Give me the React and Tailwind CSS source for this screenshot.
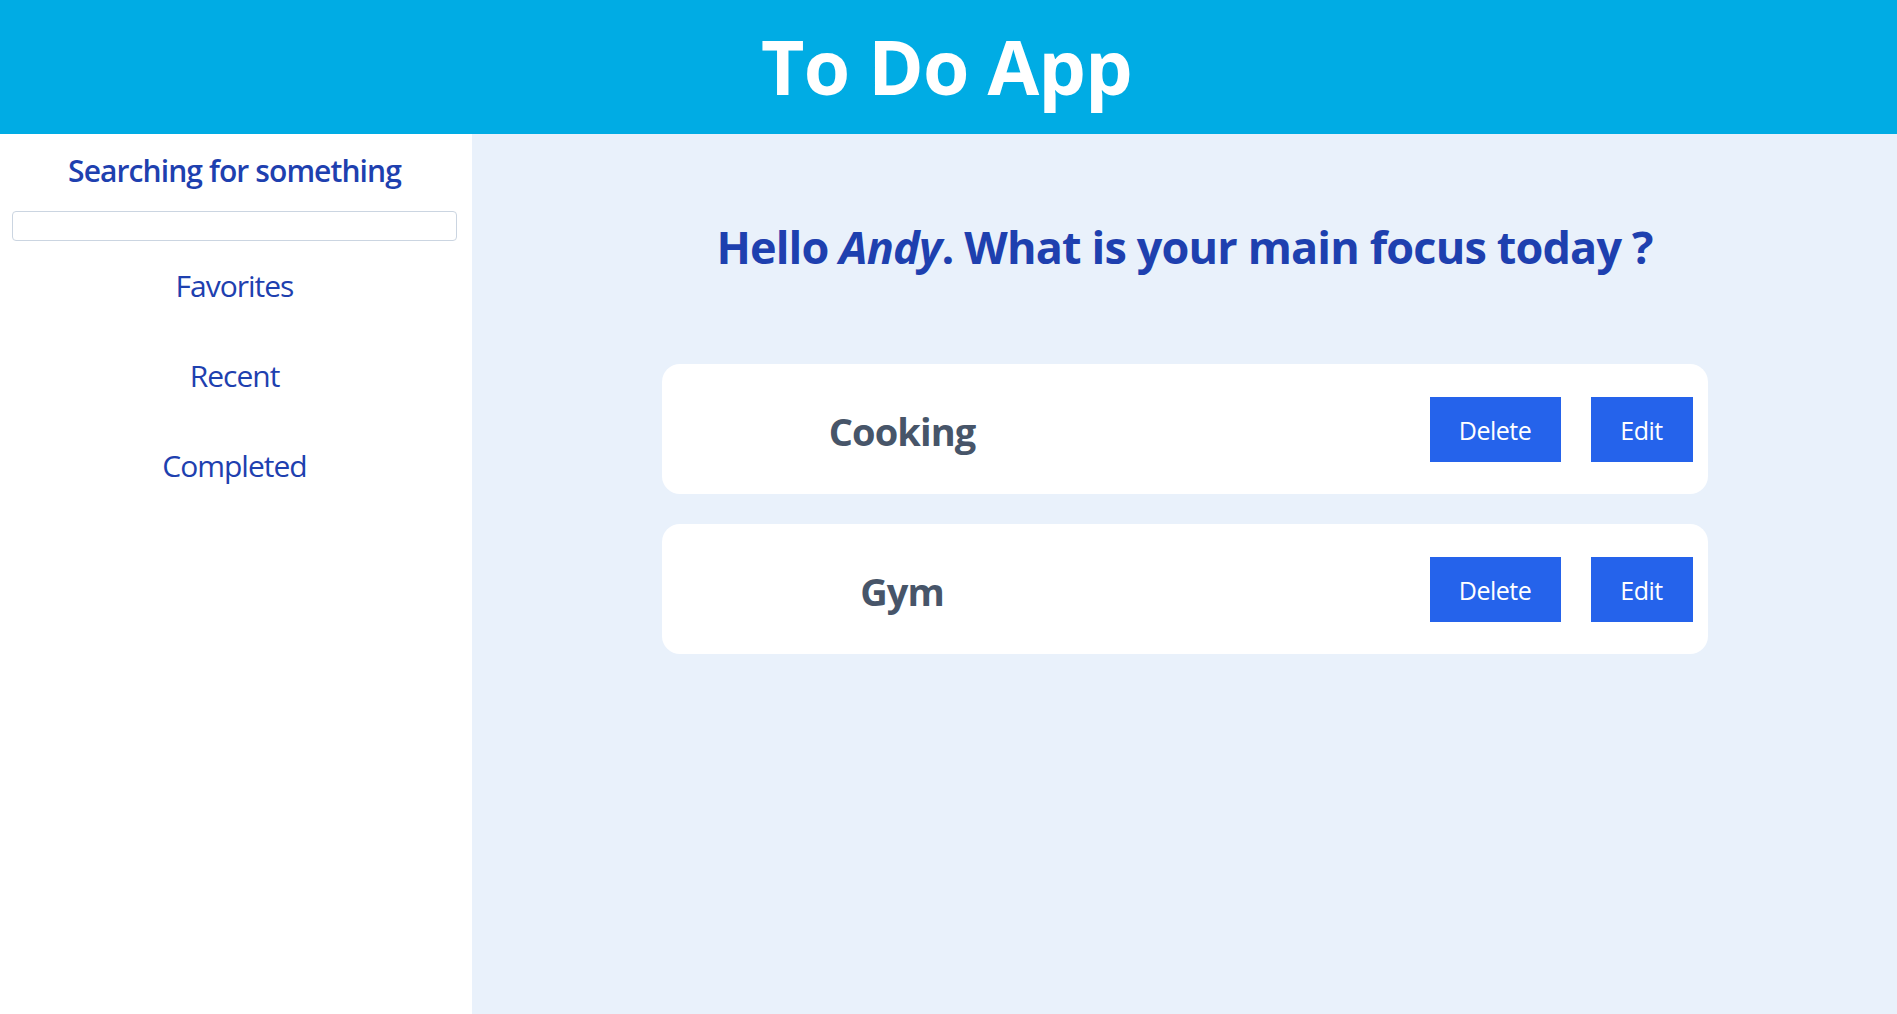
import React from 'react';

const todos = ['Cooking', 'Gym'];
const menu = ['Favorites', 'Recent', 'Completed'];

const App = () => {
    return (
        <div className="flex flex-col h-screen font-['Open_Sans','Noto_Sans',sans-serif]">
            <header className="h-[134px] shrink-0 bg-[#00ace4] flex items-center justify-center">
                <h1 className="text-white font-bold text-[75px] leading-none tracking-[-0.7px] pb-[2px] pr-[4px]">To Do App</h1>
            </header>

            <div className="flex flex-1 overflow-hidden">
                <aside className="w-[472px] shrink-0 bg-white flex flex-col items-center pl-3 pr-[15px]">
                    <h2 className="mt-[19px] text-[30px] leading-[36px] font-semibold tracking-[-0.9px] text-[#1e40af]">Searching for something</h2>
                    <input type="text" className="mt-[22px] w-full h-[30px] border border-[#cbd5e1] rounded-[4px] bg-white focus:outline-none" />
                    <ul className="mt-[27px] flex flex-col gap-[54px] items-center">
                        {menu.map((m) => (
                            <li key={m} className="text-[30px] leading-[36px] tracking-[-1px] text-[#1e40af]">{m}</li>
                        ))}
                    </ul>
                </aside>

                <main className="flex-1 bg-[#e9f1fb] flex flex-col items-center">
                    <h2 className="mt-[86px] text-[45px] leading-[54px] font-bold tracking-[-0.85px] text-[#1e40af]">
                        Hello <em>Andy</em>. What is your main focus today ?
                    </h2>
                    <div className="mt-[90px] w-[1046px] flex flex-col gap-[30px]">
                        {todos.map((t) => (
                            <div key={t} className="h-[130px] bg-white rounded-[18px] flex items-center pr-[15px]">
                                <span className="w-[481px] pt-[4px] text-center text-[38px] font-bold tracking-[-0.9px] text-[#475569]">{t}</span>
                                <div className="ml-auto flex gap-[30px]">
                                    <button className="w-[131px] h-[65px] pt-[3px] bg-[#2563eb] text-white text-[25px] tracking-[-0.5px]">Delete</button>
                                    <button className="w-[102px] h-[65px] pt-[3px] bg-[#2563eb] text-white text-[25px] tracking-[-0.5px]">Edit</button>
                                </div>
                            </div>
                        ))}
                    </div>
                </main>
            </div>
        </div>
    );
};

export default App;
